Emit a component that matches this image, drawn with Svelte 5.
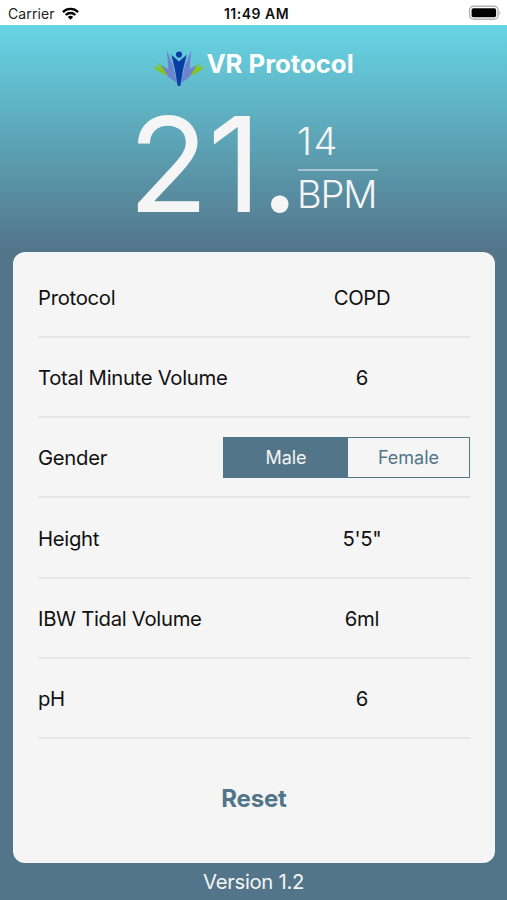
<script>
	const initial = { protocol: 'COPD', volume: 6, height: `5'5"`, tidal: '6ml', ph: 6 }
	const genders = ['Male', 'Female']

	let gender = 'Male'
	let values = { ...initial }

	$: rows = [
		['Protocol', values.protocol],
		['Total Minute Volume', values.volume],
		['Gender', null],
		['Height', values.height],
		['IBW Tidal Volume', values.tidal],
		['pH', values.ph]
	]

	function reset() {
		values = { ...initial }
		gender = 'Male'
	}
</script>

<div class='screen'>
	<div class='status'>
		<div class='carrier'>
			<span>Carrier</span>
			<svg class='wifi' viewBox='0 0 17 13' width='17' height='13'>
				<g fill='none' stroke='#000' stroke-width='2.3'>
					<path d='M.9 5.1a10.8 10.8 0 0 1 15.2 0' />
					<path d='M3.7 8a6.8 6.8 0 0 1 9.6 0' />
				</g>
				<path d='M8.5 12.8 5.8 10.1a3.9 3.9 0 0 1 5.4 0z' />
			</svg>
		</div>
		<span class='time'>11:49 AM</span>
		<svg class='battery' viewBox='0 0 34 16' width='34' height='16'>
			<rect x='1.6' y='1.2' width='28.5' height='13' rx='4' fill='#fff' stroke='#b2b2b2' stroke-width='1.4' />
			<rect x='3.6' y='3.2' width='24.5' height='9' rx='1.8' />
			<path d='M31.6 5.5q1.6 2.2 0 4.4z' fill='#999' />
		</svg>
	</div>

	<header>
		<svg class='logo' viewBox='0 0 52 38' width='52' height='38'>
			<g fill='#83c51d'>
				<path d='M0 17 7 19 4.5 13.5 12.2 19.5 14.6 27.2 4.2 21.5z' />
				<path d='M52 17 45 19 47.5 13.5 39.8 19.5 37.4 27.2 47.8 21.5z' />
			</g>
			<g fill='#6f82cf'>
				<path d='M13.8 1 20 16.5 23.8 34 15.5 28 8.2 16 15.4 20.5z' />
				<path d='M38.2 1 32 16.5 28.2 34 36.5 28 43.8 16 36.6 20.5z' />
			</g>
			<g fill='#0b3ea4'>
				<path d='M18.3 5.8 26 12.5 33.7 5.8 30.2 20 27.3 37h-2.6L21.8 20z' />
				<circle cx='26' cy='5.5' r='3.1' />
			</g>
		</svg>
		<h1>VR Protocol</h1>
	</header>

	<div class='rate'>
		<span class='whole'>21.</span>
		<div class='fraction'>
			<span class='tenths'>14</span>
			<span class='unit'>BPM</span>
		</div>
	</div>

	<main>
		{#each rows as [label, value] (label)}
			<div class='row'>
				<span>{ label }</span>
				{#if label === 'Gender'}
					<div class='segment'>
						{#each genders as g (g)}
							<button class:active={ gender === g } on:click={ () => gender = g }>{ g }</button>
						{/each}
					</div>
				{:else}
					<span class='value'>{ value }</span>
				{/if}
			</div>
		{/each}
		<button class='reset' on:click={ reset }>Reset</button>
	</main>

	<footer>Version 1.2</footer>
</div>

<style>
	:global(body) {
		margin: 0;
	}

	.screen {
		display: flex;
		flex-direction: column;
		box-sizing: border-box;
		height: 900px;
		overflow: hidden;
		font-family: Inter, 'Liberation Sans', sans-serif;
		background: linear-gradient(#67d5e5 25px, #53758a 250px);
	}

	.status {
		display: grid;
		grid-template-columns: 1fr auto 1fr;
		align-items: center;
		height: 25px;
		padding: 2px 5px 0 8px;
		box-sizing: border-box;
		background: #fff;
		color: #222;
		font-size: 14px;
	}

	.carrier {
		display: flex;
		align-items: center;
		gap: 7px;
		letter-spacing: .1px;
	}

	.wifi {
		margin-top: -1px;
	}

	.time {
		padding-left: 3px;
		font-weight: 600;
		letter-spacing: .5px;
		color: #111;
	}

	.battery {
		justify-self: end;
		margin-top: -2px;
	}

	header {
		display: flex;
		justify-content: center;
		height: 38px;
		margin-top: 24px;
	}

	.logo {
		margin-right: 1px;
	}

	h1 {
		margin: 0;
		font-size: 25.8px;
		line-height: 29px;
		font-weight: 700;
		letter-spacing: -.05px;
		color: #fff;
	}

	.rate {
		display: flex;
		justify-content: center;
		height: 165px;
		padding-right: 1px;
		color: #f5f5f5;
	}

	.whole {
		font-size: 132px;
		line-height: 155px;
		letter-spacing: -.7px;
	}

	.fraction {
		display: flex;
		flex-direction: column;
		width: 80px;
		padding-top: 31px;
		font-size: 38px;
		font-weight: 350;
		line-height: 46px;
	}

	.tenths {
		margin-left: -1px;
		letter-spacing: 1.5px;
	}

	.unit {
		margin-top: 5px;
		border-top: 2px solid #a9c3cf;
		text-indent: -1px;
		letter-spacing: -1.2px;
	}

	main {
		display: flex;
		flex-direction: column;
		box-sizing: border-box;
		width: 482px;
		height: 611px;
		margin-left: 13px;
		padding: 5.5px 25px 0;
		border-radius: 12px;
		background: #f5f5f5;
	}

	.row {
		display: flex;
		align-items: center;
		justify-content: space-between;
		box-sizing: border-box;
		height: 80.3px;
		padding-top: 1px;
		border-bottom: 2px solid #e5e5e5;
		font-size: 20.3px;
		letter-spacing: -.3px;
		color: #111;
	}

	.value {
		width: 216px;
		text-align: center;
	}

	button {
		padding: 0;
		border: 0;
		background: none;
		font-family: inherit;
		color: #53758a;
	}

	.segment {
		display: grid;
		grid-template-columns: 124px 1fr;
		box-sizing: border-box;
		width: 247px;
		height: 41px;
		border: 1.5px solid #53758a;
	}

	.segment button {
		font-size: 18px;
	}

	.segment .active {
		background: #53758a;
		color: #f5f5f5;
	}

	.reset {
		align-self: center;
		margin-top: 45px;
		font-size: 24px;
		line-height: 30px;
		font-weight: 700;
		letter-spacing: -.2px;
	}

	footer {
		padding-top: 5px;
		text-align: center;
		font-size: 20.3px;
		line-height: 28px;
		letter-spacing: -.3px;
		color: #f5f5f5;
	}
</style>
